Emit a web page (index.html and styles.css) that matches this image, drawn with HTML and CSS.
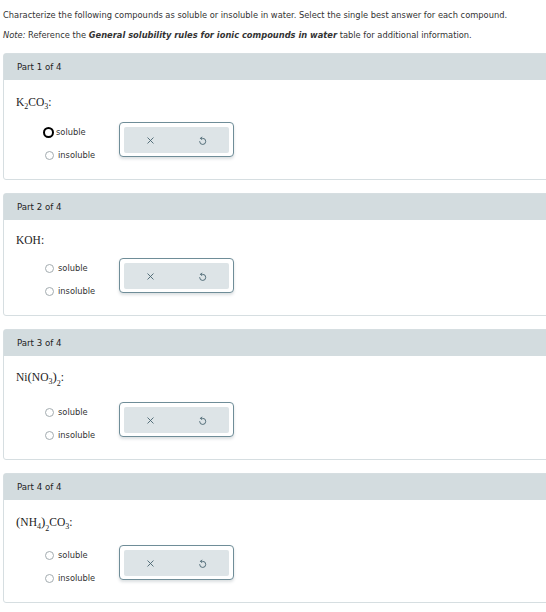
FILE: index.html
```html
<!DOCTYPE html>
<html>
<head>
<meta charset="utf-8">
<link rel="stylesheet" href="styles.css">
</head>
<body>
<div class="page">
  <p class="intro">Characterize the following compounds as soluble or insoluble in water. Select the single best answer for each compound.</p>
  <p class="note"><i>Note:</i> Reference the <b><i>General solubility rules for ionic compounds in water</i></b> table for additional information.</p>

  <section class="card">
    <div class="card-head">Part 1 of 4</div>
    <div class="card-body">
      <div class="formula f1">K<sub>2</sub>CO<sub>3</sub>:</div>
      <div class="answer">
        <div class="options">
          <label class="opt"><span class="radio focused"></span>soluble</label>
          <label class="opt"><span class="radio"></span>insoluble</label>
        </div>
        <div class="tools">
          <div class="tools-inner">
            <svg class="ico" viewBox="0 0 10 10"><path d="M2 2 L8 8 M8 2 L2 8"/></svg>
            <svg class="ico" viewBox="0 0 10 10"><path d="M4.2 1.2 L2.8 2.6 L4.2 4 M3 2.6 H5.2 A3.4 3.4 0 1 1 1.8 6.2"/></svg>
          </div>
        </div>
      </div>
    </div>
  </section>

  <section class="card">
    <div class="card-head">Part 2 of 4</div>
    <div class="card-body">
      <div class="formula f2">KOH:</div>
      <div class="answer">
        <div class="options">
          <label class="opt"><span class="radio"></span>soluble</label>
          <label class="opt"><span class="radio"></span>insoluble</label>
        </div>
        <div class="tools">
          <div class="tools-inner">
            <svg class="ico" viewBox="0 0 10 10"><path d="M2 2 L8 8 M8 2 L2 8"/></svg>
            <svg class="ico" viewBox="0 0 10 10"><path d="M4.2 1.2 L2.8 2.6 L4.2 4 M3 2.6 H5.2 A3.4 3.4 0 1 1 1.8 6.2"/></svg>
          </div>
        </div>
      </div>
    </div>
  </section>

  <section class="card">
    <div class="card-head">Part 3 of 4</div>
    <div class="card-body">
      <div class="formula f3">Ni<span class="paren">(</span>NO<sub>3</sub><span class="paren">)</span><sub class="low">2</sub>:</div>
      <div class="answer">
        <div class="options">
          <label class="opt"><span class="radio"></span>soluble</label>
          <label class="opt"><span class="radio"></span>insoluble</label>
        </div>
        <div class="tools">
          <div class="tools-inner">
            <svg class="ico" viewBox="0 0 10 10"><path d="M2 2 L8 8 M8 2 L2 8"/></svg>
            <svg class="ico" viewBox="0 0 10 10"><path d="M4.2 1.2 L2.8 2.6 L4.2 4 M3 2.6 H5.2 A3.4 3.4 0 1 1 1.8 6.2"/></svg>
          </div>
        </div>
      </div>
    </div>
  </section>

  <section class="card">
    <div class="card-head">Part 4 of 4</div>
    <div class="card-body">
      <div class="formula f4"><span class="paren">(</span>NH<sub>4</sub><span class="paren">)</span><sub class="low">2</sub>CO<sub>3</sub>:</div>
      <div class="answer">
        <div class="options">
          <label class="opt"><span class="radio"></span>soluble</label>
          <label class="opt"><span class="radio"></span>insoluble</label>
        </div>
        <div class="tools">
          <div class="tools-inner">
            <svg class="ico" viewBox="0 0 10 10"><path d="M2 2 L8 8 M8 2 L2 8"/></svg>
            <svg class="ico" viewBox="0 0 10 10"><path d="M4.2 1.2 L2.8 2.6 L4.2 4 M3 2.6 H5.2 A3.4 3.4 0 1 1 1.8 6.2"/></svg>
          </div>
        </div>
      </div>
    </div>
  </section>
</div>
</body>
</html>
```

FILE: styles.css
```css
html, body {
  margin: 0;
  padding: 0;
  background: #ffffff;
  overflow: hidden;
}
.page {
  padding: 7px 0 0 3px;
  font-family: "DejaVu Sans", Verdana, sans-serif;
  font-size: 8.3px;
  color: #333333;
}
.intro {
  margin: 0;
  line-height: 16px;
}
.note {
  margin: 4px 0 0 0;
  line-height: 16px;
}
.card {
  margin-top: 10px;
  margin-right: -6px;
  border: 1px solid #d6dee1;
  border-radius: 3px;
}
.card + .card {
  margin-top: 13px;
}
.card-head {
  background: #d3dcdf;
  height: 26px;
  line-height: 26px;
  padding-left: 13px;
  color: #222222;
  font-size: 8.6px;
}
.card-body {
  padding: 13px 0 18px 12px;
}
.formula {
  font-family: "Liberation Serif", "Times New Roman", serif;
  font-size: 11.5px;
  color: #222222;
  line-height: 18px;
  height: 18px;
}
.formula.f2 {
  height: 14px;
  line-height: 14px;
}
.formula.f3 {
  height: 22px;
  line-height: 16px;
}
.formula.f4 {
  height: 21px;
  line-height: 18px;
}
.formula sub {
  font-size: 8px;
  vertical-align: -3px;
  line-height: 0;
}
.formula sub.low {
  vertical-align: -5px;
}
.paren {
  font-size: 13px;
}
.answer {
  display: flex;
  align-items: flex-start;
  margin-top: 11px;
}
.options {
  display: flex;
  flex-direction: column;
  gap: 11px;
  padding-left: 29px;
  padding-top: 4px;
  width: 76px;
}
.opt {
  display: flex;
  align-items: center;
  gap: 4px;
  height: 12px;
  color: #333333;
  font-size: 8.3px;
}
.radio {
  width: 7px;
  height: 7px;
  border: 1px solid #a3acb0;
  border-radius: 50%;
  background: #ffffff;
}
.radio.focused {
  width: 7px;
  height: 7px;
  border: 2px solid #000000;
  margin-left: -2px;
  margin-right: -2px;
}
.tools {
  width: 115px;
  height: 35px;
  border: 1px solid #6f8d98;
  border-radius: 4px;
  padding: 4px 4px 3px 4px;
  box-sizing: border-box;
  background: #ffffff;
  box-shadow: 0 2px 3px rgba(80, 100, 110, 0.2);
  margin-left: -2px;
}
.tools-inner {
  height: 100%;
  background: #dde4e7;
  border-radius: 2px;
  display: flex;
  align-items: center;
  justify-content: space-between;
  padding: 0 22px;
}
.ico {
  width: 9px;
  height: 9px;
  fill: none;
  stroke: #46636f;
  stroke-width: 1;
  stroke-linecap: round;
  stroke-linejoin: round;
}
```
